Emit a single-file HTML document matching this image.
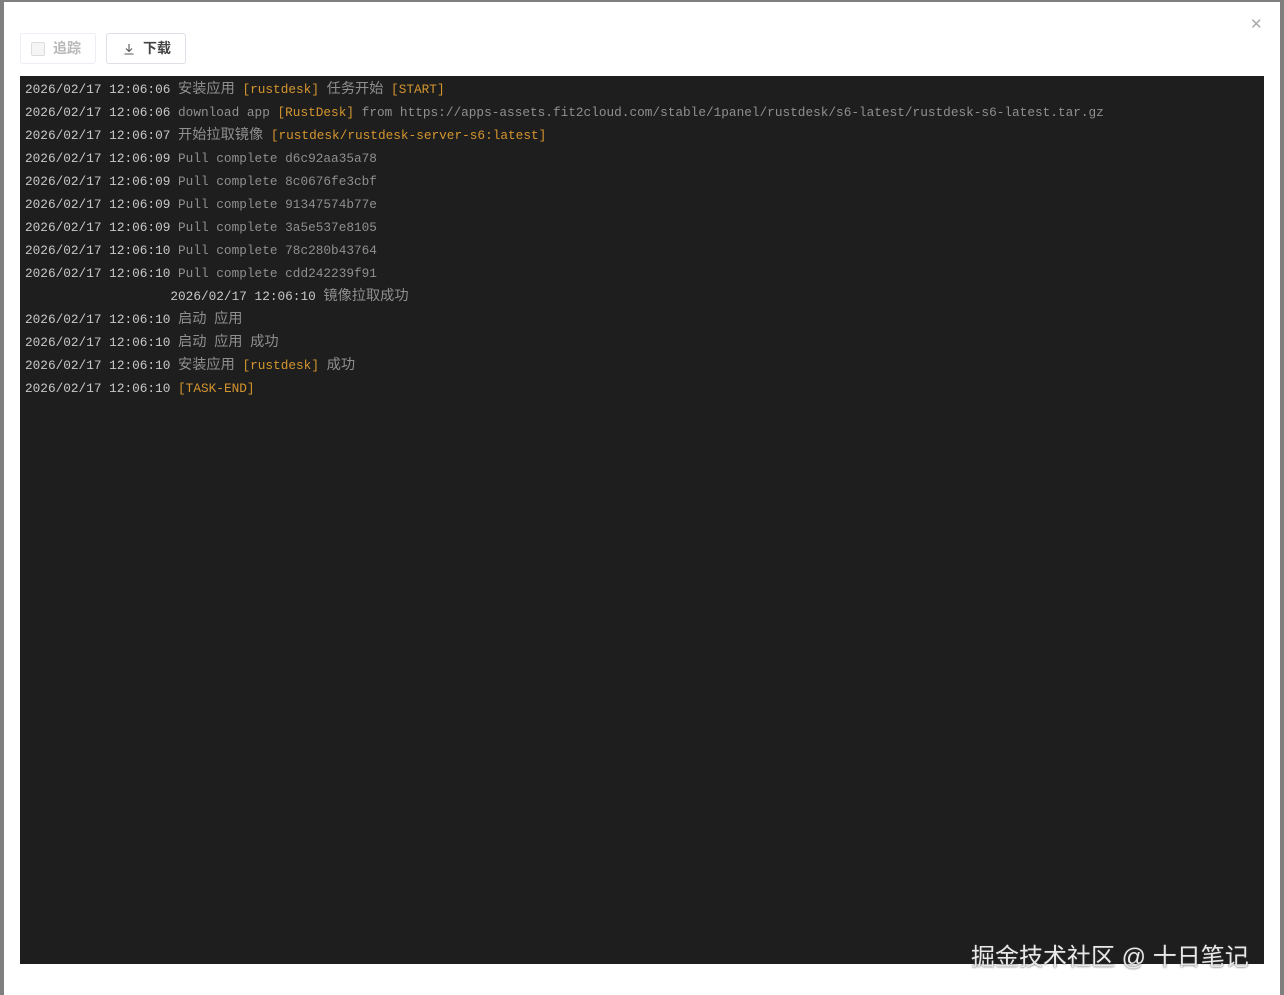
<!DOCTYPE html>
<html><head><meta charset="utf-8"><style>
body{margin:0;width:1284px;height:995px;background:#7f7f7f;overflow:hidden;position:relative;font-family:"Liberation Sans","Noto Sans CJK SC",sans-serif}
.dlg{position:absolute;left:4px;top:2px;width:1276px;height:993px;background:#fff}
.close{position:absolute;left:1250px;top:15px;color:#aaa;font-size:15px}
.btn{position:absolute;top:33px;height:31px;border:1px solid #dcdfe6;border-radius:3px;box-sizing:border-box;font-size:14px;font-weight:bold;line-height:29px}
.b1{left:20px;width:76px;color:#b8b8b8;border-color:#ebeef5}
.b1 i{position:absolute;left:10px;top:8px;width:12px;height:12px;border:1px solid #dcdcdc;background:#f5f5f5;border-radius:2px}
.b1 span{position:absolute;left:32px}
.b2{left:106px;width:80px;color:#444}
.b2 span{position:absolute;left:36px}
.term{position:absolute;left:20px;top:76px;width:1244px;height:888px;background:#1e1e1e}
.log{position:absolute;left:25px;top:78px;font-family:"Liberation Mono","Noto Sans CJK SC",monospace;font-size:12.75px;line-height:23px;color:#8f8f8f;white-space:pre}
.log b{font-weight:normal;font-size:14.2px;font-family:"Noto Sans CJK SC",sans-serif;line-height:1}
.t{color:#c8c8c8}.o{color:#d4952e}
.wm{position:absolute;left:971px;top:937px;font-size:24px;color:#e8e8e8;text-shadow:0 0 2px #333}
</style></head><body>
<div class="dlg"></div>
<div class="close">✕</div>
<div class="btn b1"><i></i><span>追踪</span></div>
<div class="btn b2"><svg style="position:absolute;left:16px;top:9px" width="12" height="12" viewBox="0 0 12 12"><path d="M6 1v7M3 5.5l3 3 3-3M1.5 11h9" stroke="#555" fill="none" stroke-width="1.1"/></svg><span>下载</span></div>
<div class="term"></div>
<div class="log"><span class="t">2026/02/17 12:06:06</span> <b>安装应用</b> <span class="o">[rustdesk]</span> <b>任务开始</b> <span class="o">[START]</span>
<span class="t">2026/02/17 12:06:06</span> download app <span class="o">[RustDesk]</span> from https://apps-assets.fit2cloud.com/stable/1panel/rustdesk/s6-latest/rustdesk-s6-latest.tar.gz
<span class="t">2026/02/17 12:06:07</span> <b>开始拉取镜像</b> <span class="o">[rustdesk/rustdesk-server-s6:latest]</span>
<span class="t">2026/02/17 12:06:09</span> Pull complete d6c92aa35a78
<span class="t">2026/02/17 12:06:09</span> Pull complete 8c0676fe3cbf
<span class="t">2026/02/17 12:06:09</span> Pull complete 91347574b77e
<span class="t">2026/02/17 12:06:09</span> Pull complete 3a5e537e8105
<span class="t">2026/02/17 12:06:10</span> Pull complete 78c280b43764
<span class="t">2026/02/17 12:06:10</span> Pull complete cdd242239f91
                   <span class="t">2026/02/17 12:06:10</span> <b>镜像拉取成功</b>
<span class="t">2026/02/17 12:06:10</span> <b>启动</b> <b>应用</b>
<span class="t">2026/02/17 12:06:10</span> <b>启动</b> <b>应用</b> <b>成功</b>
<span class="t">2026/02/17 12:06:10</span> <b>安装应用</b> <span class="o">[rustdesk]</span> <b>成功</b>
<span class="t">2026/02/17 12:06:10</span> <span class="o">[TASK-END]</span></div>
<div class="wm">掘金技术社区 @ 十日笔记</div>
</body></html>
